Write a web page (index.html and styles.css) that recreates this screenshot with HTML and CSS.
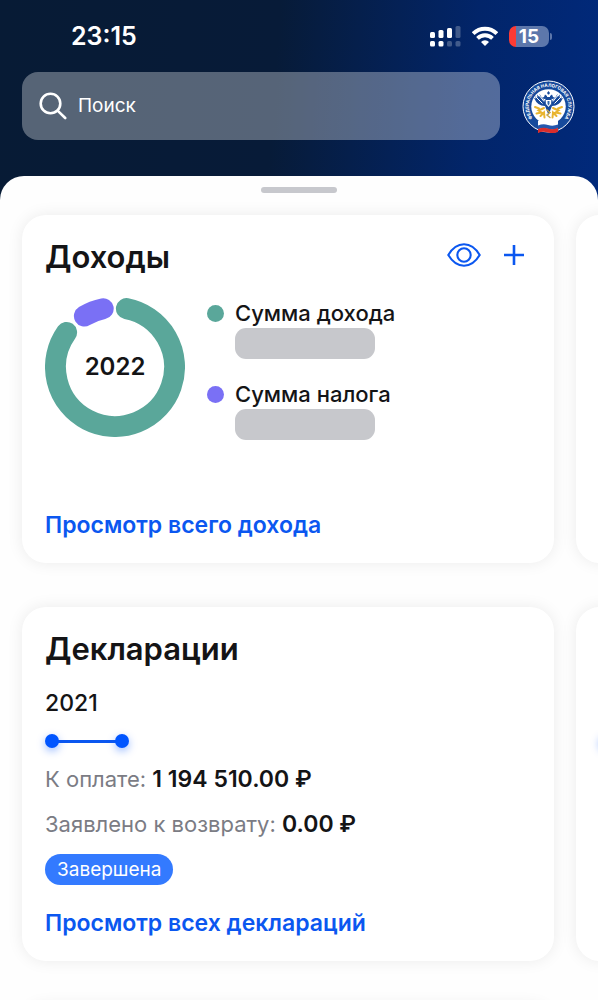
FILE: index.html
```
<!DOCTYPE html>
<html lang="ru">

<head>
    <meta charset="utf-8">
    <meta name="viewport" content="width=device-width, initial-scale=1">
    <title>Налоги</title>
    <link rel="stylesheet" href="styles.css">
</head>

<body>
    <div class="app">
        <header class="top">
            <div class="status">
                <span class="time">23:15</span>
                <div class="status-icons">
                    <svg width="31" height="22" viewBox="0 0 31 22" fill="#fff">
                        <rect x="0" y="7" width="5" height="6" rx="1.5" />
                        <rect x="8.5" y="5" width="5" height="8" rx="1.5" />
                        <rect x="17" y="3" width="5" height="10" rx="1.5" />
                        <rect x="25.5" y="1" width="5" height="12" rx="1.5" opacity=".25" />
                        <rect x="0" y="16" width="5" height="5.5" rx="1.5" />
                        <rect x="8.5" y="16" width="5" height="5.5" rx="1.5" />
                        <rect x="17" y="16" width="5" height="5.5" rx="1.5" opacity=".25" />
                        <rect x="25.5" y="16" width="5" height="5.5" rx="1.5" opacity=".25" />
                    </svg>
                    <svg width="26" height="20" viewBox="0 0 26 20" fill="none" stroke="#fff" stroke-width="3.8">
                        <path d="M1.2 7.6a16.8 16.8 0 0 1 23.6 0" />
                        <path d="M5.5 12.3a10.7 10.7 0 0 1 15 0" />
                        <path d="M13 20l-4-4a5.6 5.6 0 0 1 8 0z" fill="#fff" stroke="none" />
                    </svg>
                    <div class="battery">15</div>
                </div>
            </div>
            <div class="search-row">
                <label class="search">
                    <svg width="28" height="28" viewBox="0 0 28 28" fill="none" stroke="#fff" stroke-width="2.6" stroke-linecap="round">
                        <circle cx="11.5" cy="11.5" r="9.8" />
                        <path d="M18.6 18.6l7.6 7.4" />
                    </svg>
                    <input class="search-input" type="search" placeholder="Поиск" aria-label="Поиск">
                </label>
                <svg class="emblem" width="53" height="53" viewBox="0 0 106 106" role="img" aria-label="Федеральная налоговая служба">
                    <defs>
                        <path id="ring" d="M29 84.4A39.5 39.5 0 1 1 77 84.4" />
                    </defs>
                    <circle cx="53" cy="53" r="51" fill="#164a9c" stroke="#fff" stroke-width="2" />
                    <circle cx="53" cy="53" r="34.5" fill="#fff" />
                    <text class="emblem-text"><textPath href="#ring" startOffset="50%" text-anchor="middle">ФЕДЕРАЛЬНАЯ НАЛОГОВАЯ СЛУЖБА</textPath></text>
                    <!-- eagle -->
                    <g fill="#174a9b">
                        <path d="M53 22l3 4-2 3h-2l-2-3z" />
                        <path d="M46 29l4 3v5l-5 1-6-2 5-2z" />
                        <path d="M60 29l-4 3v5l5 1 6-2-5-2z" />
                        <path d="M47 34h12l1 18-4 10-3 8-3-8-4-10z" />
                        <path d="M46 52Q31 52 24 36l4 1-2-5 5 3-1-6 5 5 0-6 5 8 6 6z" />
                        <path d="M60 52q15 0 22-16l-4 1 2-5-5 3 1-6-5 5 0-6-5 8-6 6z" />
                    </g>
                    <g fill="none" stroke="#fff" stroke-width="2">
                        <path d="M27 33l14 14M34 30l10 13M79 33L65 47M72 30L62 43" />
                    </g>
                    <path d="M48 40h10v8l-5 6-5-6z" fill="#fff" />
                    <path d="M51 42h4v6l-2 3-2-3z" fill="#3269ae" />
                    <g fill="none" stroke="#e9b52f" stroke-width="4" stroke-linecap="round">
                        <path d="M26 54l8 3M44 56l-11 5 6 4-10 2M37 72l7-7 1 10M80 54l-8 3M62 56l11 5-6 4 10 2M69 72l-7-7-1 10" />
                        <path d="M50 60l6 5-6 5 6 5" stroke="#c9a84a" stroke-width="3" />
                    </g>
                    <!-- flag -->
                    <path d="M32 82q10-4 20-1t20-1v23q-9 4-20 1t-20 1z" fill="#fff" />
                    <path d="M32 91q10-4 20-1t20-1v8q-9 4-20 1t-20 1z" fill="#2457ad" />
                    <path d="M32 98q10-4 20-1t20-1v8q-9 4-20 1t-20 1z" fill="#d92d2b" />
                </svg>
            </div>
        </header>

        <main class="sheet">
            <div class="handle"></div>

            <div class="carousel">
                <section class="card">
                    <div class="card-head">
                        <h2>Доходы</h2>
                        <div class="actions">
                            <button class="icon-btn" type="button" aria-label="Показать суммы">
                                <svg width="34" height="24" viewBox="0 0 34 24" fill="none" stroke="#0b57f0" stroke-width="2.1">
                                    <path d="M1.3 12C5.5 5 10.8 1.3 17 1.3S28.5 5 32.7 12C28.5 19 23.2 22.7 17 22.7S5.5 19 1.3 12z" />
                                    <circle cx="17" cy="12" r="6.7" />
                                </svg>
                            </button>
                            <button class="icon-btn" type="button" aria-label="Добавить">
                                <svg width="20" height="20" viewBox="0 0 20 20" stroke="#0b57f0" stroke-width="2.6">
                                    <path d="M10 0v20M0 10h20" />
                                </svg>
                            </button>
                        </div>
                    </div>
                    <div class="income">
                        <div class="donut">
                            <svg width="140" height="140" viewBox="0 0 140 140" fill="none" stroke-width="21" stroke-linecap="round">
                                <path d="M81.4 11.6A59.5 59.5 0 1 1 21.6 35.4" stroke="#5aa79a" />
                                <path d="M39.4 19A59.5 59.5 0 0 1 58.2 11.7" stroke="#7a70f5" />
                            </svg>
                            <span class="donut-year">2022</span>
                        </div>
                        <ul class="legend">
                            <li>
                                <span class="dot dot-income"></span>
                                <span>Сумма дохода</span>
                                <span class="hidden-sum"></span>
                            </li>
                            <li>
                                <span class="dot dot-tax"></span>
                                <span>Сумма налога</span>
                                <span class="hidden-sum"></span>
                            </li>
                        </ul>
                    </div>
                    <a class="more" href="#income">Просмотр всего дохода</a>
                </section>
                <section class="card"></section>
            </div>

            <div class="carousel">
                <section class="card declarations">
                    <div class="card-head">
                        <h2>Декларации</h2>
                    </div>
                    <div class="year">2021</div>
                    <div class="steps"></div>
                    <div class="sum">К оплате: <b>1 194 510.00 ₽</b></div>
                    <div class="sum">Заявлено к возврату: <b>0.00 ₽</b></div>
                    <span class="badge">Завершена</span>
                    <a class="more" href="#declarations">Просмотр всех деклараций</a>
                </section>
                <section class="card card-next">
                    <div class="steps"></div>
                </section>
            </div>

            <div class="carousel">
                <section class="card"></section>
            </div>
        </main>
    </div>
</body>

</html>
```

FILE: styles.css
```
* {
    box-sizing: border-box;
}

body {
    margin: 0;
    font-family: Inter, "Liberation Sans", sans-serif;
    font-size: 22px;
    line-height: 30px;
    color: #141416;
}

.app {
    display: flex;
    flex-direction: column;
    height: 100vh;
    overflow: hidden;
    background: linear-gradient(94deg, #071b35 0%, #071b38 42%, #02256a 72%, #002b82 100%);
}

/* top bar */
.top {
    padding: 0 23px 36px 22px;
}

.status {
    display: flex;
    justify-content: space-between;
    align-items: center;
    height: 72px;
    padding: 0 23px 0 49px;
    color: #fff;
}

.time {
    font-size: 25px;
    font-weight: 600;
}

.status-icons {
    display: flex;
    align-items: center;
    gap: 11px;
}

.battery {
    position: relative;
    width: 40px;
    height: 21px;
    margin-right: 3px;
    border-radius: 7px;
    background: linear-gradient(90deg, #fb3b35 7px, #5d77ab 7px);
    font-size: 19px;
    font-weight: 700;
    line-height: 21px;
    text-align: center;
}

.battery::after {
    content: "";
    position: absolute;
    right: -3px;
    top: 7px;
    width: 2px;
    height: 7px;
    border-radius: 0 2px 2px 0;
    background: #5d77ab;
}

.search-row {
    display: flex;
    align-items: center;
    gap: 22px;
}

.search {
    flex: 1;
    display: flex;
    align-items: center;
    gap: 11px;
    height: 68px;
    padding: 0 17px;
    border-radius: 16px;
    background: rgba(255, 255, 255, .32);
}

.search-input {
    flex: 1;
    min-width: 0;
    padding: 0;
    border: 0;
    outline: 0;
    background: none;
    color: #fff;
    font: inherit;
    font-size: 19px;
}

.search-input::placeholder {
    color: #fff;
    opacity: 1;
}

.emblem {
    flex: none;
}

.emblem-text {
    font-size: 9px;
    font-weight: 700;
    fill: #fff;
}

/* sheet */
.sheet {
    flex: 1;
    min-height: 0;
    overflow: hidden;
    border-radius: 24px 24px 0 0;
    background: #fefefe;
}

.handle {
    width: 76px;
    height: 6px;
    margin: 11px auto 0;
    border-radius: 3px;
    background: #c7c8cd;
}

.carousel {
    display: flex;
    gap: 22px;
    padding: 22px;
    overflow: hidden;
}

.card {
    flex: 0 0 calc(100% - 22px);
    min-height: 200px;
    padding: 22px 23px 23px;
    border-radius: 24px;
    background: #fff;
    box-shadow: 0 0 16px rgba(0, 0, 0, .08);
}

.card-head {
    display: flex;
    justify-content: space-between;
    align-items: center;
    height: 39px;
}

h2 {
    margin: 0;
    font-size: 31px;
    font-weight: 600;
}

.actions {
    display: flex;
    align-items: center;
    gap: 23px;
    margin-right: 7px;
    padding-bottom: 3px;
}

.icon-btn {
    display: flex;
    padding: 0;
    border: 0;
    background: none;
    cursor: pointer;
}

.income {
    display: flex;
    align-items: flex-start;
    gap: 22px;
    margin: 21px 0 70px;
}

.donut {
    display: grid;
    place-items: center;
}

.donut > * {
    grid-area: 1 / 1;
}

.donut-year {
    font-size: 24px;
    font-weight: 600;
}

.legend {
    display: flex;
    flex-direction: column;
    gap: 20px;
    margin: 0;
    padding: 1px 0 0;
    list-style: none;
    font-weight: 500;
}

.legend li {
    display: grid;
    grid-template-columns: 17px auto;
    column-gap: 11px;
    align-items: center;
}

.dot {
    width: 17px;
    height: 17px;
    border-radius: 50%;
}

.dot-income {
    background: #5aa79a;
}

.dot-tax {
    background: #7a70f5;
}

.hidden-sum {
    grid-column: 2;
    width: 140px;
    height: 31px;
    border-radius: 11px;
    background: #c7c8cc;
}

.more {
    display: block;
    color: #0b57f0;
    font-size: 23px;
    font-weight: 600;
    text-decoration: none;
}

/* declarations */
.declarations {
    display: flex;
    flex-direction: column;
    align-items: flex-start;
    gap: 15px;
}

.year {
    margin-top: 5px;
    font-size: 23px;
    font-weight: 500;
}

.steps {
    display: flex;
    align-items: center;
    justify-content: space-between;
    width: 84px;
    height: 16px;
    background: linear-gradient(#0b57f0, #0b57f0) center / 70px 3px no-repeat;
}

.steps::before,
.steps::after {
    content: "";
    width: 14px;
    height: 14px;
    border-radius: 50%;
    background: #0055ff;
    box-shadow: 0 3px 8px rgba(0, 85, 255, .4);
}

.card-next {
    padding-top: 126px;
}

.sum {
    color: #7b7c84;
}

.sum b {
    color: #141416;
    font-size: 23px;
    font-weight: 600;
}

.badge {
    padding: 0 12px;
    border-radius: 16px;
    background: #337aff;
    color: #fff;
    font-size: 19px;
    line-height: 31px;
}

.declarations .more {
    margin-top: 8px;
}
```
